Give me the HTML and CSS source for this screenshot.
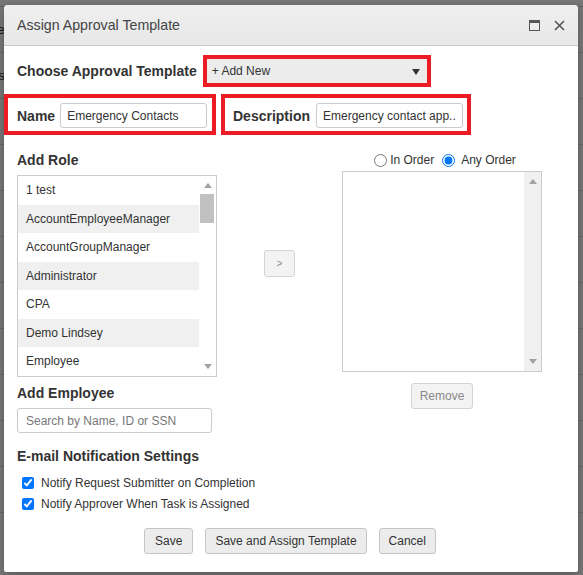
FILE: index.html
```html
<!DOCTYPE html>
<html lang="en">

<head>
    <meta charset="UTF-8">
    <meta name="viewport" content="width=device-width, initial-scale=1.0">
    <title>Assign Approval Template</title>
    <link rel="stylesheet" href="styles.css">
</head>

<body>
    <!-- page behind the modal -->
    <div class="page">
        <div class="page-top"></div>
        <div class="page-row">Overview</div>
        <div class="page-row">Requests</div>
        <div class="page-row link">New</div>
        <div class="page-row">Items</div>
        <div class="page-row">Status</div>
        <div class="page-row link">View</div>
        <div class="page-row">Open</div>
        <div class="page-row">Form</div>
        <div class="page-row">Form</div>
        <div class="page-row">Form</div>
        <div class="page-row">Form</div>
    </div>
    <div class="backdrop"></div>

    <div class="dialog">
        <div class="dialog-title">
            <span>Assign Approval Template</span>
            <div class="title-icons">
                <svg width="11" height="11" viewBox="0 0 11 11">
                    <rect x="0.5" y="0.5" width="10" height="10" fill="none" stroke="#555" stroke-width="1" />
                    <rect x="0.5" y="0.5" width="10" height="2.5" fill="#555" />
                </svg>
                <svg width="11" height="11" viewBox="0 0 11 11">
                    <path d="M1 1 L10 10 M10 1 L1 10" stroke="#555" stroke-width="1.6" />
                </svg>
            </div>
        </div>

        <div class="dialog-body">
            <div class="choose-row">
                <label class="heading">Choose Approval Template</label>
                <div class="mark mark-select">
                    <div class="select">
                        <span>+ Add New</span>
                        <span class="caret"></span>
                    </div>
                </div>
            </div>

            <div class="fields-row">
                <div class="mark mark-name">
                    <label class="heading" for="name">Name</label>
                    <input type="text" id="name" class="name-input" value="Emergency Contacts">
                </div>
                <div class="mark mark-desc">
                    <label class="heading" for="desc">Description</label>
                    <input type="text" id="desc" class="desc-input" value="Emergency contact app...">
                </div>
            </div>

            <div class="roles">
                <div class="col-left">
                    <div class="heading">Add Role</div>
                    <div class="listbox role-list">
                        <div class="items">
                            <div class="item">1 test</div>
                            <div class="item alt">AccountEmployeeManager</div>
                            <div class="item">AccountGroupManager</div>
                            <div class="item alt">Administrator</div>
                            <div class="item">CPA</div>
                            <div class="item alt">Demo Lindsey</div>
                            <div class="item">Employee</div>
                        </div>
                        <div class="scrollbar white">
                            <span class="arrow up"></span>
                            <span class="thumb"></span>
                            <span class="arrow down"></span>
                        </div>
                    </div>

                    <div class="heading emp-heading">Add Employee</div>
                    <input type="text" class="search" placeholder="Search by Name, ID or SSN">
                </div>

                <div class="col-mid">
                    <button class="btn btn-move">&gt;</button>
                </div>

                <div class="col-right">
                    <div class="order">
                        <label><input type="radio" name="order"><span>In Order</span></label>
                        <label><input type="radio" name="order" checked><span>Any Order</span></label>
                    </div>
                    <div class="listbox chosen-list">
                        <div class="items"></div>
                        <div class="scrollbar">
                            <span class="arrow up"></span>
                            <span class="arrow down"></span>
                        </div>
                    </div>
                    <button class="btn btn-remove" disabled>Remove</button>
                </div>
            </div>

            <div class="heading notify-heading">E-mail Notification Settings</div>
            <label class="check"><input type="checkbox" checked>Notify Request Submitter on Completion</label>
            <label class="check"><input type="checkbox" checked>Notify Approver When Task is Assigned</label>

            <div class="actions">
                <button class="btn">Save</button>
                <button class="btn">Save and Assign Template</button>
                <button class="btn">Cancel</button>
            </div>
        </div>
    </div>
</body>

</html>
```

FILE: styles.css
```css
body {
    margin: 0;
    font-family: 'Liberation Sans', Arial, sans-serif;
    font-size: 12px;
    color: #333;
    overflow: hidden;
}

/* background page */
.page {
    height: 575px;
    background: #fff;
    color: #333;
    font-size: 13px;
}

.page-top {
    height: 6px;
    border-bottom: 1px solid #ccc;
}

.page-row {
    height: 45px;
    line-height: 45px;
    padding: 0 570px 0 0;
    border-bottom: 1px solid #ddd;
    white-space: nowrap;
    text-indent: -40px;
}

.page-row.link {
    color: #1a5ea8;
}

.backdrop {
    position: absolute;
    inset: 0;
    background: rgba(0, 0, 0, 0.53);
}

/* modal */
.dialog {
    position: absolute;
    left: 4px;
    top: 5px;
    width: 574px;
    height: 567px;
    background: #fff;
    border-radius: 4px 4px 2px 2px;
    box-shadow: 0 2px 8px rgba(0, 0, 0, 0.3);
    overflow: hidden;
}

.dialog-title {
    height: 40px;
    display: flex;
    align-items: center;
    justify-content: space-between;
    padding: 0 13px;
    background: linear-gradient(#efefef, #e8e8e8);
    border-bottom: 1px solid #c9c9c9;
    font-size: 14.2px;
    color: #444;
}

.title-icons {
    display: flex;
    gap: 14px;
}

.dialog-body {
    padding: 9px 13px 0 13px;
}

.heading {
    font-size: 14px;
    line-height: 16px;
    font-weight: bold;
    color: #333;
}

.mark {
    border: 4px solid #ec1c24;
    box-sizing: border-box;
}

.choose-row {
    display: flex;
    align-items: center;
    gap: 6px;
    height: 32px;
}

.mark-select {
    width: 228px;
    height: 32px;
}

.select {
    height: 100%;
    display: flex;
    align-items: center;
    justify-content: space-between;
    padding: 0 7px 0 5px;
    background: #ececec;
    color: #333;
}

.caret {
    border-left: 4px solid transparent;
    border-right: 4px solid transparent;
    border-top: 6px solid #333;
    margin-top: 2px;
}

.fields-row {
    display: flex;
    gap: 5px;
    margin: 7px 0 0 -13px;
}

.fields-row .mark {
    height: 41px;
    display: flex;
    align-items: center;
    padding: 2px 4px 0 9px;
}

.mark-name {
    width: 212px;
    gap: 5px;
}

.mark-desc {
    width: 250px;
    gap: 6px;
    padding-left: 8px !important;
}

input[type=text] {
    font-family: inherit;
    font-size: 12px;
    color: #333;
    height: 25px;
    border: 1px solid #ccc;
    border-radius: 3px;
    box-sizing: border-box;
    padding: 0 6px;
}

.name-input {
    width: 147px;
}

.desc-input {
    width: 147px;
}

.roles {
    display: flex;
    margin-top: 17px;
}

.col-left {
    width: 200px;
}

.col-mid {
    width: 125px;
    display: flex;
    justify-content: center;
    align-items: flex-start;
    padding-top: 98px;
    box-sizing: border-box;
}

.col-right {
    width: 200px;
    display: flex;
    flex-direction: column;
    align-items: center;
}

.listbox {
    display: flex;
    border: 1px solid #ccc;
    box-sizing: border-box;
}

.role-list {
    margin-top: 7px;
    height: 202px;
}

.items {
    flex: 1;
}

.item {
    height: 28.5px;
    line-height: 29px;
    padding-left: 8px;
    white-space: nowrap;
}

.item.alt {
    background: #f0f0f0;
}

.scrollbar {
    width: 17px;
    position: relative;
    background: #f0f0f0;
}

.scrollbar.white {
    background: #fff;
}

.arrow {
    position: absolute;
    left: 5px;
    border-left: 4px solid transparent;
    border-right: 4px solid transparent;
}

.arrow.up {
    top: 7px;
    border-bottom: 5px solid #a3a3a3;
}

.arrow.down {
    bottom: 7px;
    border-top: 5px solid #a3a3a3;
}

.thumb {
    position: absolute;
    left: 1px;
    top: 18px;
    width: 14px;
    height: 29px;
    background: #c1c1c1;
}

.emp-heading {
    margin-top: 8px;
}

.search {
    width: 195px;
    margin-top: 7px;
    padding: 0 8px !important;
}

.search::placeholder {
    color: #777;
}

.order {
    display: flex;
    height: 16px;
    margin-left: 6px;
}

.order label {
    display: flex;
    align-items: center;
    font-size: 12px;
}

.order input {
    margin: 0 3px 0 0;
    width: 13px;
    height: 13px;
}

.order label:last-child {
    margin-left: 8px;
}

.order label:last-child input {
    margin-right: 6px;
}

.chosen-list {
    width: 200px;
    height: 201px;
    margin-top: 3px;
}

.btn {
    font-family: inherit;
    font-size: 12px;
    color: #333;
    height: 26px;
    padding: 0 9px;
    background: #ececec;
    border: 1px solid #c5c5c5;
    border-radius: 3px;
}

.btn-move {
    width: 31px;
    height: 27px;
    color: #888;
    background: #f3f3f3;
    border-color: #d4d4d4;
    font-size: 10px;
}

.btn-remove {
    margin-top: 11px;
    padding: 0 8px;
    color: #888;
    background: #f3f3f3;
    border-color: #d4d4d4;
}

.notify-heading {
    margin-top: 15px;
}

.check {
    display: flex;
    align-items: center;
    margin-left: 5px;
    height: 21px;
}

.check:first-of-type {
    margin-top: 8px;
}

.check input {
    margin: 0 7px 0 0;
    width: 12px;
    height: 12px;
}

.actions {
    display: flex;
    justify-content: center;
    gap: 12px;
    margin-top: 14px;
    padding-right: 2px;
}

.actions .btn:first-child {
    padding: 0 10px;
}
```
